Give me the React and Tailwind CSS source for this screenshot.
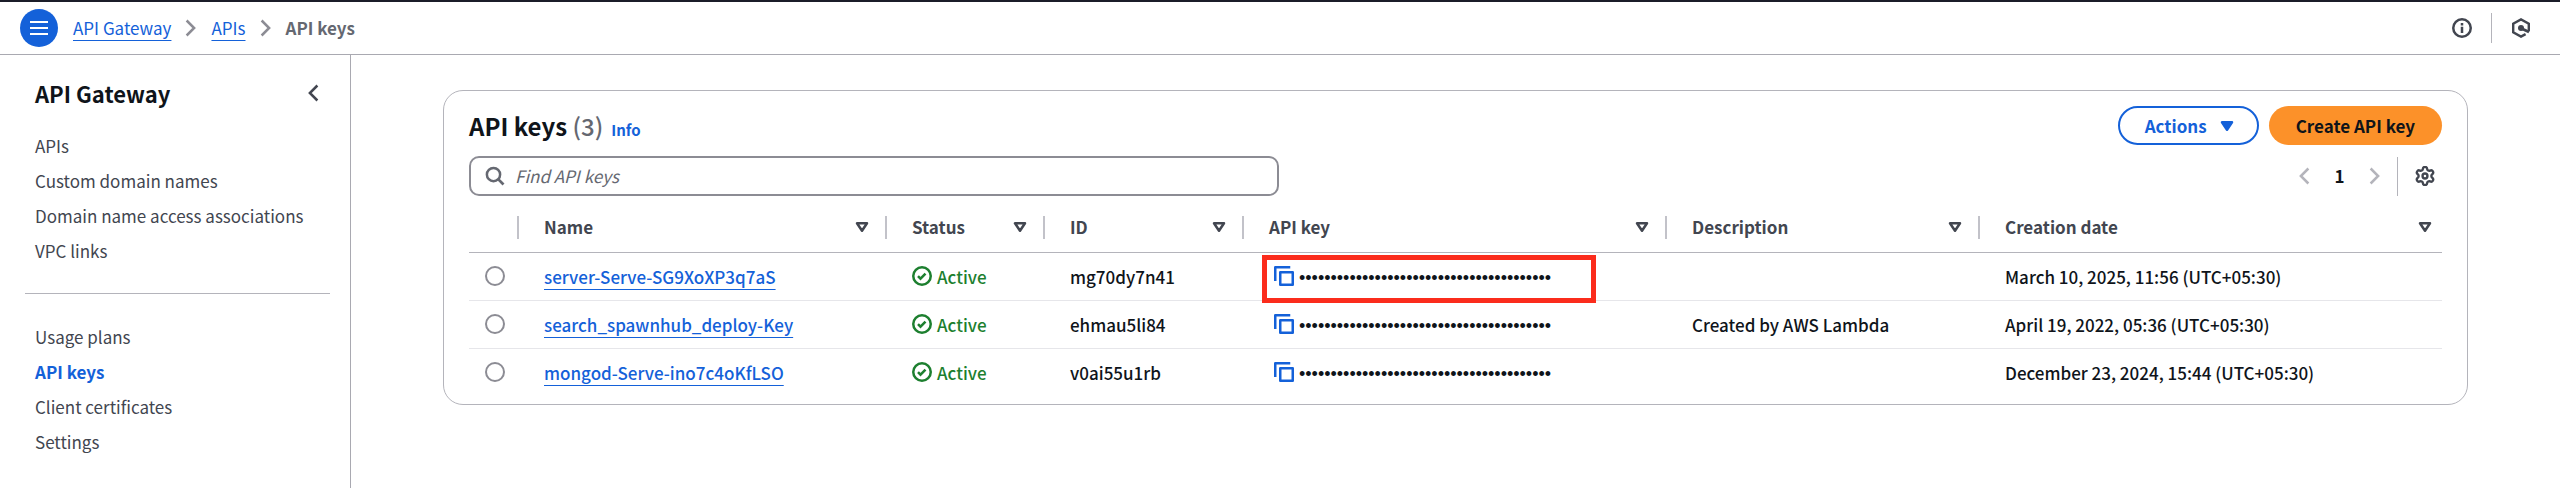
const iconBase = {
  viewBox: "0 0 16 16",
  fill: "none",
  stroke: "currentColor",
  strokeWidth: 2,
  "aria-hidden": true,
};

function Chevron({ left = false, className = "" }) {
  return (
    <svg {...iconBase} className={`size-5 shrink-0 ${className}`}>
      <path d={left ? "m11.5 2-6 6 6 6" : "m4.5 2 6 6-6 6"} />
    </svg>
  );
}

function FilterCaret({ filled = false }) {
  return (
    <svg {...iconBase} strokeLinejoin="round" className="size-5 shrink-0">
      <path d="M4 5h8l-4 6-4-6Z" fill={filled ? "currentColor" : "none"} />
    </svg>
  );
}

function SearchIcon() {
  return (
    <svg {...iconBase} className="size-5 shrink-0 text-[#656871]">
      <circle cx="6.8" cy="6.8" r="5.3" />
      <path d="m10.5 10.5 4.3 4.3" strokeWidth="2.2" />
    </svg>
  );
}

function SuccessIcon() {
  return (
    <svg {...iconBase} className="size-5 shrink-0">
      <circle cx="8" cy="8" r="7" />
      <path d="m4.8 8.1 2 2 4-4" />
    </svg>
  );
}

function CopyIcon() {
  return (
    <svg {...iconBase} strokeLinejoin="round" className="size-5">
      <path d="M13 1H1v11M5 5h10v10H5V5Z" />
    </svg>
  );
}

function GearIcon() {
  return (
    <svg {...iconBase} viewBox="1 1 22 22" strokeWidth="2.6" strokeLinejoin="round" className="size-5">
      <path d="M9.671 4.136a2.34 2.34 0 0 1 4.659 0 2.34 2.34 0 0 0 3.319 1.915 2.34 2.34 0 0 1 2.33 4.033 2.34 2.34 0 0 0 0 3.831 2.34 2.34 0 0 1-2.33 4.033 2.34 2.34 0 0 0-3.319 1.915 2.34 2.34 0 0 1-4.659 0 2.34 2.34 0 0 0-3.32-1.915 2.34 2.34 0 0 1-2.33-4.033 2.34 2.34 0 0 0 0-3.831A2.34 2.34 0 0 1 6.35 6.051a2.34 2.34 0 0 0 3.319-1.915Z" />
      <circle cx="12" cy="12" r="2.7" />
    </svg>
  );
}

function InfoIcon() {
  return (
    <svg {...iconBase} className="size-5">
      <circle cx="8" cy="8" r="7" strokeWidth="2" />
      <path d="M8 7v5M8 4v2" />
    </svg>
  );
}

function HexagonIcon() {
  return (
    <svg {...iconBase} viewBox="0 0 20 20" className="size-5">
      <path d="M17.8 13.2V5.6L10 1.4 2.2 5.6v8.8l7.8 4.2 4.6-2.5" strokeWidth="2.4" />
      <circle cx="10" cy="10" r="3" fill="currentColor" stroke="none" />
      <path d="m10.5 10.5 7.5 3.6" strokeWidth="2.8" />
    </svg>
  );
}

const linkText =
  "text-[#1461d9] underline decoration-1 underline-offset-[5px] [text-decoration-skip-ink:none]";

const primaryNav = ["APIs", "Custom domain names", "Domain name access associations", "VPC links"];
const secondaryNav = ["Usage plans", "API keys", "Client certificates", "Settings"];

const columns = [
  { label: "Name", width: "w-[368px]" },
  { label: "Status", width: "w-[158px]" },
  { label: "ID", width: "w-[199px]" },
  { label: "API key", width: "w-[423px]" },
  { label: "Description", width: "w-[313px]" },
  { label: "Creation date", width: "" },
];

const keys = [
  {
    name: "server-Serve-SG9XoXP3q7aS",
    id: "mg70dy7n41",
    description: "",
    created: "March 10, 2025, 11:56 (UTC+05:30)",
    highlighted: true,
  },
  {
    name: "search_spawnhub_deploy-Key",
    id: "ehmau5li84",
    description: "Created by AWS Lambda",
    created: "April 19, 2022, 05:36 (UTC+05:30)",
  },
  {
    name: "mongod-Serve-ino7c4oKfLSO",
    id: "v0ai55u1rb",
    description: "",
    created: "December 23, 2024, 15:44 (UTC+05:30)",
  },
];

function NavList({ items }) {
  return (
    <ul className="flex flex-col">
      {items.map((item) => (
        <li key={item} className="h-[35px] leading-[35px]">
          <a
            href="#"
            className={item === "API keys" ? "font-bold text-[#1461d9]" : "text-[#424650]"}
          >
            {item}
          </a>
        </li>
      ))}
    </ul>
  );
}

function TopBar() {
  return (
    <header className="flex h-[55px] items-center justify-between border-t-2 border-b border-t-[#1b1d29] border-b-[#a9a9b1] pr-[29px] pl-5">
      <div className="flex items-center">
        <button
          type="button"
          aria-label="Open navigation"
          className="mr-[15px] flex size-[38px] items-center justify-center rounded-full bg-[#1461d9] text-white"
        >
          <svg {...iconBase} viewBox="0 0 20 20" className="size-5">
            <path d="M1 4h18M1 10h18M1 16h18" />
          </svg>
        </button>
        <nav aria-label="Breadcrumb">
          <ol className="flex items-center">
            <li><a href="#" className={linkText}>API Gateway</a></li>
            <li className="mx-[10px] text-[#8c8c94]"><Chevron /></li>
            <li><a href="#" className={linkText}>APIs</a></li>
            <li className="mx-[10px] text-[#8c8c94]"><Chevron /></li>
            <li className="font-bold text-[#656871]" aria-current="page">API keys</li>
          </ol>
        </nav>
      </div>
      <div className="flex items-center text-[#424650]">
        <button type="button" aria-label="Show help panel"><InfoIcon /></button>
        <span className="mx-[19px] h-[30px] w-px bg-[#b4b4bb]" />
        <button type="button" aria-label="Open tools"><HexagonIcon /></button>
      </div>
    </header>
  );
}

function Sidebar() {
  return (
    <aside className="w-[351px] shrink-0 border-r border-[#a9a9b1] pt-[22px] pr-5 pl-[25px]">
      <div className="flex items-center justify-between pr-[7px] pl-[10px]">
        <h2 className="text-[22px] leading-8 font-bold text-[#0f141a]">API Gateway</h2>
        <button type="button" aria-label="Close navigation" className="text-[#424650]">
          <Chevron left />
        </button>
      </div>
      <nav aria-label="API Gateway">
        <div className="pt-[19px] pl-[10px]"><NavList items={primaryNav} /></div>
        <hr className="my-[25px] border-[#b4b4bb]" />
        <div className="pl-[10px]"><NavList items={secondaryNav} /></div>
      </nav>
    </aside>
  );
}

function KeysTable() {
  return (
    <table className="mt-[7px] w-full table-fixed border-collapse text-left font-medium">
      <thead>
        <tr className="h-[49px] border-b border-[#b4b4bb] text-[#424650]">
          <th scope="col" aria-label="Selection" className="w-[50px]">
            <div className="h-[23px] border-r-2 border-[#c2c2c9]" />
          </th>
          {columns.map((column, index) => (
            <th key={column.label} scope="col" className={column.width}>
              <div
                className={`flex h-[23px] items-center justify-between pl-[25px] ${
                  index < columns.length - 1 ? "border-r-2 border-[#c2c2c9] pr-[13px]" : "pr-[7px]"
                }`}
              >
                {column.label}
                <FilterCaret />
              </div>
            </th>
          ))}
        </tr>
      </thead>
      <tbody className="text-[#0f141a]">
        {keys.map((item) => (
          <tr key={item.id} className="h-12 border-b border-[#e6e6ea] last:border-b-0">
            <td className="pl-4">
              <input
                type="radio"
                name="api-key"
                aria-label={`Select ${item.name}`}
                className="block size-5 appearance-none rounded-full border-2 border-[#8c8c94] bg-white checked:border-[6px] checked:border-[#1461d9]"
              />
            </td>
            <td className="pt-[2px] pl-[25px]"><a href="#" className={linkText}>{item.name}</a></td>
            <td className="pl-[25px]">
              <span className="flex items-center gap-[5px] text-[#1d7f2f]">
                <SuccessIcon />
                <span className="pt-[2px]">Active</span>
              </span>
            </td>
            <td className="pt-[2px] pl-[25px]">{item.id}</td>
            <td className="relative pl-[30px]">
              <span className="flex items-center gap-[5px]">
                <button type="button" aria-label={`Copy key ${item.name}`} className="text-[#1461d9]">
                  <CopyIcon />
                </button>
                <span className="pt-1 font-['Liberation_Sans',sans-serif] text-[18px] leading-6">
                  {"•".repeat(40)}
                </span>
              </span>
              {item.highlighted && (
                <span className="pointer-events-none absolute top-[2px] left-[18px] h-12 w-[334px] border-5 border-[#fb2c1c]" />
              )}
            </td>
            <td className="pt-[2px] pl-[25px]">{item.description}</td>
            <td className="pt-[2px] pl-[25px]">{item.created}</td>
          </tr>
        ))}
      </tbody>
    </table>
  );
}

export default function App() {
  return (
    <div className="flex min-h-screen flex-col bg-white font-['Noto_Sans_CJK_SC',sans-serif] text-[17px] leading-6">
      <TopBar />
      <div className="flex flex-1">
        <Sidebar />
        <main className="min-w-0 flex-1 pt-[35px] pr-[92px] pl-[92px]">
          <section className="rounded-[20px] border border-[#b4b4bb] px-[25px] pt-[15px] pb-[8px]">
            <div className="flex items-center justify-between">
              <div className="flex items-baseline">
                <h1 className="text-[24px] leading-8 font-bold text-[#0f141a]">
                  API keys <span className="font-medium text-[#656871]">(3)</span>
                </h1>
                <a href="#" className="ml-2 text-[15px] font-bold text-[#1461d9]">Info</a>
              </div>
              <div className="flex gap-[10px]">
                <button
                  type="button"
                  className="flex h-[39px] items-center gap-[10px] rounded-full border-2 border-[#1461d9] pr-[20px] pl-[25px] font-bold text-[#1461d9]"
                >
                  Actions
                  <FilterCaret filled />
                </button>
                <button
                  type="button"
                  className="h-[39px] rounded-full bg-[#fc9129] px-[27px] font-bold text-[#0f141a]"
                >
                  Create API key
                </button>
              </div>
            </div>
            <div className="mt-[11px] flex items-center justify-between">
              <label className="flex h-10 w-[810px] items-center gap-[10px] rounded-[10px] border-2 border-[#8c8c94] px-[14px]">
                <SearchIcon />
                <input
                  type="search"
                  aria-label="Find API keys"
                  placeholder="Find API keys"
                  className="min-w-0 flex-1 bg-transparent outline-none placeholder:text-[#656871] placeholder:italic"
                />
              </label>
              <div className="flex items-center">
                <button type="button" aria-label="Previous page" disabled className="text-[#b4b4bb]">
                  <Chevron left />
                </button>
                <button type="button" aria-current="page" className="w-[51px] font-bold text-[#0f141a]">
                  1
                </button>
                <button type="button" aria-label="Next page" disabled className="text-[#b4b4bb]">
                  <Chevron />
                </button>
                <span className="mr-[17px] ml-[12px] h-[39px] w-px bg-[#b4b4bb]" />
                <button type="button" aria-label="Preferences" className="mr-[7px] text-[#424650]">
                  <GearIcon />
                </button>
              </div>
            </div>
            <KeysTable />
          </section>
        </main>
      </div>
    </div>
  );
}
